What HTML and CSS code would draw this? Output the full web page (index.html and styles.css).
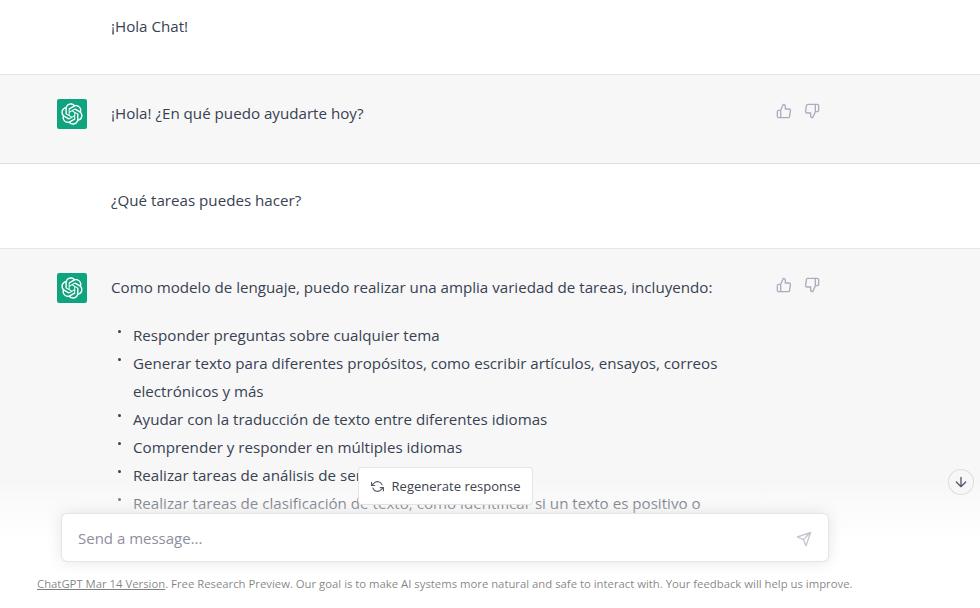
FILE: index.html
```html
<!DOCTYPE html>
<html lang="es">
<head>
<meta charset="utf-8">
<title>ChatGPT</title>
<link rel="stylesheet" href="styles.css">
</head>
<body>
<svg class="defs" width="0" height="0" aria-hidden="true">
  <symbol id="logo" viewBox="0 0 41 41"><path fill="currentColor" d="M37.5324 16.8707C37.9808 15.5241 38.1363 14.0974 37.9886 12.6859C37.8409 11.2744 37.3934 9.91076 36.676 8.68622C35.6126 6.83404 33.9882 5.3676 32.0373 4.4985C30.0864 3.62941 27.9098 3.40259 25.8215 3.85078C24.8796 2.7893 23.7219 1.94125 22.4257 1.36341C21.1295 0.785575 19.7249 0.491269 18.3058 0.500197C16.1708 0.495044 14.0893 1.16803 12.3614 2.42214C10.6335 3.67624 9.34853 5.44666 8.6917 7.47815C7.30085 7.76286 5.98686 8.3414 4.8377 9.17505C3.68854 10.0087 2.73073 11.0782 2.02839 12.312C0.956464 14.1591 0.498905 16.2988 0.721698 18.4228C0.944492 20.5467 1.83612 22.5449 3.268 24.1293C2.81966 25.4759 2.66413 26.9026 2.81182 28.3141C2.95951 29.7256 3.40701 31.0892 4.12437 32.3138C5.18791 34.1659 6.8123 35.6322 8.76321 36.5013C10.7141 37.3704 12.8907 37.5973 14.9789 37.1492C15.9208 38.2107 17.0786 39.0587 18.3747 39.6366C19.6709 40.2144 21.0755 40.5087 22.4946 40.4998C24.6307 40.5054 26.7133 39.8321 28.4418 38.5772C30.1704 37.3223 31.4556 35.5506 32.1119 33.5179C33.5027 33.2332 34.8167 32.6547 35.9659 31.821C37.115 30.9874 38.0728 29.9178 38.7752 28.684C39.8458 26.8371 40.3023 24.6979 40.0789 22.5748C39.8556 20.4517 38.9639 18.4544 37.5324 16.8707ZM22.4978 37.8849C20.7443 37.8874 19.0459 37.2733 17.6994 36.1501C17.7601 36.117 17.8666 36.0586 17.936 36.0161L25.9004 31.4156C26.1003 31.3019 26.2663 31.137 26.3813 30.9378C26.4964 30.7386 26.5563 30.5124 26.5549 30.2825V19.0542L29.9213 20.998C29.9389 21.0068 29.9541 21.0198 29.9656 21.0359C29.977 21.052 29.9842 21.0707 29.9867 21.0902V30.3889C29.9842 32.375 29.1946 34.2791 27.7909 35.6841C26.3872 37.0892 24.4838 37.8806 22.4978 37.8849ZM6.39227 31.0064C5.51397 29.4888 5.19742 27.7107 5.49804 25.9832C5.55718 26.0187 5.66048 26.0818 5.73461 26.1244L13.699 30.7248C13.8975 30.8408 14.1233 30.902 14.3532 30.902C14.583 30.902 14.8088 30.8408 15.0073 30.7248L24.731 25.1103V28.9979C24.7321 29.0177 24.7283 29.0376 24.7199 29.0556C24.7115 29.0736 24.6988 29.0893 24.6829 29.1012L16.6317 33.7497C14.9096 34.7416 12.8643 35.0097 10.9447 34.4954C9.02506 33.9811 7.38785 32.7263 6.39227 31.0064ZM4.29707 13.6194C5.17156 12.0998 6.55279 10.9364 8.19885 10.3327C8.19885 10.4013 8.19491 10.5228 8.19491 10.6071V19.808C8.19351 20.0378 8.25334 20.2638 8.36823 20.4629C8.48312 20.6619 8.64893 20.8267 8.84863 20.9404L18.5723 26.5542L15.206 28.4979C15.1894 28.5089 15.1703 28.5155 15.1505 28.5173C15.1307 28.5191 15.1107 28.516 15.0924 28.5082L7.04046 23.8557C5.32135 22.8601 4.06716 21.2235 3.55289 19.3046C3.03862 17.3858 3.30624 15.3413 4.29707 13.6194ZM31.955 20.0556L22.2312 14.4411L25.5976 12.4981C25.6142 12.4872 25.6333 12.4805 25.6531 12.4787C25.6729 12.4769 25.6928 12.4801 25.7111 12.4879L33.7631 17.1364C34.9967 17.849 36.0017 18.8982 36.6606 20.1613C37.3194 21.4244 37.6047 22.849 37.4832 24.2684C37.3617 25.6878 36.8382 27.0432 35.9743 28.1759C35.1103 29.3086 33.9415 30.1717 32.6047 30.6641C32.6047 30.5947 32.6047 30.4733 32.6047 30.3889V21.188C32.6066 20.9586 32.5474 20.7328 32.4332 20.5338C32.319 20.3348 32.154 20.1698 31.955 20.0556ZM35.3055 15.0128C35.2464 14.9765 35.1431 14.9142 35.069 14.8717L27.1045 10.2712C26.906 10.1554 26.6803 10.0943 26.4504 10.0943C26.2206 10.0943 25.9948 10.1554 25.7963 10.2712L16.0726 15.8858V11.9982C16.0715 11.9783 16.0753 11.9585 16.0837 11.9405C16.0921 11.9225 16.1048 11.9068 16.1207 11.8949L24.1719 7.25025C25.4053 6.53903 26.8158 6.19376 28.2383 6.25482C29.6608 6.31589 31.0364 6.78077 32.2044 7.59508C33.3723 8.40939 34.2842 9.53945 34.8334 10.8531C35.3826 12.1667 35.5464 13.6095 35.3055 15.0128ZM14.2424 21.9419L10.8752 19.9981C10.8576 19.9893 10.8423 19.9763 10.8309 19.9602C10.8195 19.9441 10.8122 19.9254 10.8098 19.9058V10.6071C10.8107 9.18295 11.2173 7.78848 11.9819 6.58696C12.7466 5.38544 13.8377 4.42659 15.1275 3.82264C16.4173 3.21869 17.8524 2.99464 19.2649 3.1767C20.6775 3.35876 22.0089 3.93941 23.1034 4.85067C23.0427 4.88379 22.937 4.94215 22.8668 4.98473L14.9024 9.58517C14.7025 9.69878 14.5366 9.86356 14.4215 10.0626C14.3065 10.2616 14.2466 10.4877 14.2479 10.7175L14.2424 21.9419ZM16.071 17.9991L20.4018 15.4978L24.7325 17.9975V22.9985L20.4018 25.4983L16.071 22.9985V17.9991Z"/></symbol>
  <symbol id="up" viewBox="0 0 24 24"><path d="M14 9V5a3 3 0 0 0-3-3l-4 9v11h11.28a2 2 0 0 0 2-1.7l1.38-9a2 2 0 0 0-2-2.3zM7 22H4a2 2 0 0 1-2-2v-7a2 2 0 0 1 2-2h3"/></symbol>
  <symbol id="down" viewBox="0 0 24 24"><path d="M10 15v4a3 3 0 0 0 3 3l4-9V2H5.72a2 2 0 0 0-2 1.7l-1.38 9a2 2 0 0 0 2 2.3zm7-13h2.67A2.31 2.31 0 0 1 22 4v7a2.31 2.31 0 0 1-2.33 2H17"/></symbol>
</svg>
<main class="app">
  <div class="thread">
    <section class="row row-user">
      <div class="inner"><div class="avatar-space"></div><p class="msg">¡Hola Chat!</p></div>
    </section>
    <section class="row row-bot">
      <div class="inner">
        <div class="avatar"><svg class="logo"><use href="#logo"/></svg></div>
        <div class="msg"><p>¡Hola! ¿En qué puedo ayudarte hoy?</p></div>
        <div class="actions">
          <svg class="thumb"><use href="#up"/></svg>
          <svg class="thumb"><use href="#down"/></svg>
        </div>
      </div>
    </section>
    <section class="row row-user">
      <div class="inner"><div class="avatar-space"></div><p class="msg">¿Qué tareas puedes hacer?</p></div>
    </section>
    <section class="row row-bot">
      <div class="inner">
        <div class="avatar"><svg class="logo"><use href="#logo"/></svg></div>
        <div class="msg">
          <p>Como modelo de lenguaje, puedo realizar una amplia variedad de tareas, incluyendo:</p>
          <ul class="list">
            <li>Responder preguntas sobre cualquier tema</li>
            <li>Generar texto para diferentes propósitos, como escribir artículos, ensayos, correos electrónicos y más</li>
            <li>Ayudar con la traducción de texto entre diferentes idiomas</li>
            <li>Comprender y responder en múltiples idiomas</li>
            <li>Realizar tareas de análisis de sentimientos</li>
            <li>Realizar tareas de clasificación de texto, como identificar si un texto es positivo o negativo</li>
          </ul>
        </div>
        <div class="actions">
          <svg class="thumb"><use href="#up"/></svg>
          <svg class="thumb"><use href="#down"/></svg>
        </div>
      </div>
    </section>
  </div>

  <button class="scroll-down" type="button" aria-label="Scroll to bottom">
    <svg viewBox="0 0 24 24"><path d="M12 5v14M19 12l-7 7-7-7"/></svg>
  </button>

  <div class="composer">
    <button class="regen" type="button">
      <svg viewBox="0 0 24 24"><path d="M1 4v6h6M23 20v-6h-6"/><path d="M20.49 9A9 9 0 0 0 5.64 5.64L1 10m22 4l-4.64 4.36A9 9 0 0 1 3.51 15"/></svg>
      Regenerate response
    </button>
    <div class="input">
      <span class="placeholder">Send a message...</span>
      <svg class="send" viewBox="0 0 24 24"><path d="M22 2 11 13M22 2l-7 20-4-9-9-4z"/></svg>
    </div>
    <p class="foot"><a href="#">ChatGPT Mar 14 Version</a>. Free Research Preview. Our goal is to make AI systems more natural and safe to interact with. Your feedback will help us improve.</p>
  </div>
</main>
</body>
</html>
```

FILE: styles.css
```css
* { box-sizing: border-box; }
html, body { margin: 0; padding: 0; height: 100%; }
body {
  font-family: "Open Sans", "Noto Sans", "Liberation Sans", sans-serif;
  color: #374151;
  background: #fff;
  overflow: hidden;
}
.defs { position: absolute; }
.app { position: relative; height: 608px; overflow: hidden; }
.thread { margin-top: -10px; }
p { margin: 0; }

.row { border-bottom: 1px solid rgba(0, 0, 0, .1); }
.row-bot { background: #f7f7f8; }
.row:last-child { border-bottom: 0; }
.inner {
  display: flex;
  gap: 24px;
  padding: 24px 0 24px 57px;
  font-size: 15.15px;
  line-height: 28px;
}
.row-user .inner { min-height: 84px; }
.row-user .msg { line-height: 24px; }
.row-bot .inner { min-height: 88px; }
.avatar-space { width: 30px; flex: none; }
.avatar {
  width: 30px;
  height: 30px;
  flex: none;
  background: #10a37f;
  border-radius: 2px;
  color: #fff;
  display: flex;
  align-items: center;
  justify-content: center;
}
.logo { width: 22px; height: 22px; }
.msg { width: 640px; flex: none; }
.list { list-style: none; margin: 20px 0 0; padding: 0 0 0 22px; }
.list li { position: relative; }
.list li::before {
  content: "";
  position: absolute;
  left: -15px;
  top: 9px;
  width: 3px;
  height: 3px;
  border-radius: 50%;
  background: #374151;
}
.actions { display: flex; gap: 12px; height: 16px; margin-top: 4px; margin-left: 1px; }
.thumb {
  width: 16px;
  height: 16px;
  fill: none;
  stroke: #acacbe;
  stroke-width: 2;
  stroke-linecap: round;
  stroke-linejoin: round;
}

.scroll-down {
  position: absolute;
  z-index: 2;
  left: 948px;
  top: 469px;
  width: 26px;
  height: 26px;
  padding: 0;
  border: 1px solid rgba(0, 0, 0, .1);
  border-radius: 50%;
  background: #f7f7f8;
  display: flex;
  align-items: center;
  justify-content: center;
}
.scroll-down svg {
  width: 16px;
  height: 16px;
  fill: none;
  stroke: #565869;
  stroke-width: 2;
  stroke-linecap: round;
  stroke-linejoin: round;
}

.composer {
  position: absolute;
  left: 0;
  right: 0;
  bottom: 0;
  height: 149px;
  padding: 8px 0 0 61px;
  background-image: linear-gradient(180deg, rgba(255, 255, 255, 0) 13.94%, #fff 54.73%);
  display: flex;
  flex-direction: column;
  align-items: flex-start;
}
.regen {
  align-self: flex-start;
  margin-left: 297px;
  height: 38px;
  width: 175px;
  padding: 0 12px;
  background: #fff;
  border: 1px solid rgba(0, 0, 0, .1);
  border-radius: 4px;
  display: flex;
  align-items: center;
  justify-content: center;
  gap: 8px;
  font: inherit;
  font-size: 13px;
  color: #40414f;
  white-space: nowrap;
}
.regen svg {
  width: 13px;
  height: 13px;
  flex: none;
  fill: none;
  stroke: #565869;
  stroke-width: 2;
  stroke-linecap: round;
  stroke-linejoin: round;
}
.input {
  margin-top: 8px;
  width: 768px;
  height: 49px;
  padding: 0 16px;
  background: #fff;
  border: 1px solid rgba(0, 0, 0, .1);
  border-radius: 6px;
  box-shadow: 0 0 15px rgba(0, 0, 0, .1);
  display: flex;
  align-items: center;
  justify-content: space-between;
}
.placeholder { font-size: 15px; color: #8e8ea0; }
.send {
  width: 16px;
  height: 16px;
  margin-top: 3px;
  fill: none;
  stroke: #c5c5d2;
  stroke-width: 2;
  stroke-linecap: round;
  stroke-linejoin: round;
}
.foot {
  margin: 14px 0 0 -24px;
  font-size: 11.32px;
  line-height: 16px;
  color: rgba(0, 0, 0, .5);
  white-space: nowrap;
}
.foot a { color: inherit; text-decoration: underline; }
```
